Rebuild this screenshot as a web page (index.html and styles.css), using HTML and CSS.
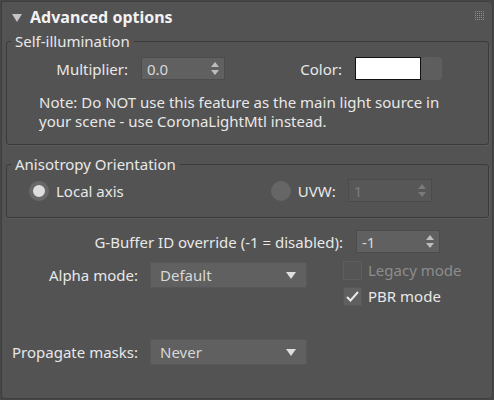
FILE: index.html
```html
<!DOCTYPE html>
<html lang="en">
<head>
    <meta charset="UTF-8">
    <title>Advanced options</title>
    <link rel="stylesheet" href="styles.css">
</head>
<body>
    <div class="rollout">
        <div class="rollout-head">
            <svg class="twisty" width="10" height="8" viewBox="0 0 10 8"><polygon points="0,0 10,0 5,8" fill="#c4c4c4"/></svg>
            <span class="rollout-title">Advanced options</span>
            <svg class="grip" width="9" height="9" viewBox="0 0 9 9">
                <defs><pattern id="dots" width="2" height="2" patternUnits="userSpaceOnUse"><rect width="1" height="1" fill="#8e8e8e"/></pattern></defs>
                <rect width="9" height="9" fill="url(#dots)"/>
            </svg>
        </div>

        <fieldset class="group group-self">
            <legend>Self-illumination</legend>
            <div class="row row-mult">
                <label class="lbl lbl-mult">Multiplier:</label>
                <div class="spinner">
                    <span class="spinner-value">0.0</span>
                    <svg class="arrows" width="8" height="13" viewBox="0 0 8 13"><polygon points="4,0 8,5 0,5" fill="#bdbdbd"/><polygon points="0,8 8,8 4,13" fill="#bdbdbd"/></svg>
                </div>
                <label class="lbl lbl-color">Color:</label>
                <div class="swatch"></div>
                <div class="swatch-btn"></div>
            </div>
            <p class="note">Note: Do NOT use this feature as the main light source in<br>your scene - use CoronaLightMtl instead.</p>
        </fieldset>

        <fieldset class="group group-aniso">
            <legend>Anisotropy Orientation</legend>
            <div class="row row-radio">
                <span class="radio checked"></span>
                <span class="radio-text">Local axis</span>
                <span class="radio radio-uvw"></span>
                <span class="radio-text">UVW:</span>
                <div class="spinner spinner-uvw disabled">
                    <span class="spinner-value">1</span>
                    <svg class="arrows" width="8" height="13" viewBox="0 0 8 13"><polygon points="4,0 8,5 0,5" fill="#7a7a7a"/><polygon points="0,8 8,8 4,13" fill="#7a7a7a"/></svg>
                </div>
            </div>
        </fieldset>

        <div class="row row-gbuf">
            <label class="lbl lbl-gbuf">G-Buffer ID override (-1 = disabled):</label>
            <div class="spinner spinner-gbuf">
                <span class="spinner-value">-1</span>
                <svg class="arrows" width="8" height="13" viewBox="0 0 8 13"><polygon points="4,0 8,5 0,5" fill="#bdbdbd"/><polygon points="0,8 8,8 4,13" fill="#bdbdbd"/></svg>
            </div>
        </div>

        <div class="row row-alpha">
            <label class="lbl lbl-left">Alpha mode:</label>
            <div class="dropdown">
                <span>Default</span>
                <svg class="drop-arrow" width="10" height="7" viewBox="0 0 10 7"><polygon points="0,0 10,0 5,7" fill="#dedede"/></svg>
            </div>
            <div class="checks">
                <div class="check-row disabled">
                    <span class="checkbox"></span>
                    <span class="check-text">Legacy mode</span>
                </div>
                <div class="check-row">
                    <span class="checkbox">
                        <svg width="13" height="11" viewBox="0 0 13 11"><polyline points="1,6 4.5,9.5 12,1" fill="none" stroke="#e8e8e8" stroke-width="2"/></svg>
                    </span>
                    <span class="check-text">PBR mode</span>
                </div>
            </div>
        </div>

        <div class="row row-prop">
            <label class="lbl lbl-left">Propagate masks:</label>
            <div class="dropdown">
                <span>Never</span>
                <svg class="drop-arrow" width="10" height="7" viewBox="0 0 10 7"><polygon points="0,0 10,0 5,7" fill="#dedede"/></svg>
            </div>
        </div>
    </div>
</body>
</html>
```
FILE: styles.css
```css
body {
    margin: 0;
    background-color: #464646;
    font-family: "Noto Sans", "Open Sans", sans-serif;
    font-size: 15px;
    color: #e8e8e8;
}

.rollout {
    margin: 1px 1px 0 1px;
    height: 396px;
    background-color: #535353;
    border: 1px solid #3f3f3f;
    border-radius: 2px 5px 4px 4px;
    box-sizing: content-box;
}

.rollout-head {
    display: flex;
    align-items: center;
    height: 30px;
    padding-left: 10px;
}
.twisty {
    margin-top: 1px;
}
.rollout-title {
    margin-left: 8px;
    font-weight: bold;
    font-size: 16px;
    color: #f2f2f2;
}
.grip {
    margin-left: auto;
    margin-right: 8px;
    margin-top: -3px;
}

.group {
    margin: 0 3px 0 4px;
    padding: 0;
    border: 1px solid #3b3b3b;
    border-radius: 3px;
    box-shadow: 1px 1px 0 #5b5b5b;
}
.group legend {
    margin-left: 4px;
    padding: 0 4px;
    line-height: 18px;
}

.row {
    display: flex;
    align-items: center;
}
.lbl {
    text-align: right;
}

.row-mult {
    margin-top: 7px;
}
.lbl-mult {
    width: 121px;
}
.lbl-color {
    width: 117px;
}

.spinner {
    display: flex;
    align-items: center;
    box-sizing: border-box;
    width: 84px;
    height: 23px;
    margin-left: 13px;
    padding: 0 5px 0 5px;
    background-color: #606060;
    border: 1px solid #4c4c4c;
    color: #d8d8d8;
}
.spinner-value {
    flex: 1;
}
.spinner.disabled {
    background-color: #575757;
    border-color: #4b4b4b;
    color: #7c7c7c;
}

.swatch {
    box-sizing: border-box;
    width: 66px;
    height: 23px;
    margin-left: 13px;
    background-color: #ffffff;
    border: 1px solid #111111;
}
.swatch-btn {
    width: 21px;
    height: 23px;
    background-color: #5e5e5e;
    border-radius: 4px;
}

.note {
    margin: 13px 0 13px 32px;
    line-height: 19px;
}

.group-aniso {
    margin-top: 10px;
}
.row-radio {
    padding: 6px 0 15px 22px;
}
.radio {
    box-sizing: border-box;
    width: 20px;
    height: 20px;
    border-radius: 50%;
    background-color: #666666;
}
.radio.checked {
    border: 4px solid #686868;
    background-color: #dedede;
}
.radio-text {
    margin-left: 7px;
}
.radio-uvw {
    margin-left: 147px;
}
.spinner-uvw {
    margin-left: 12px;
}

.row-gbuf {
    margin-top: 12px;
}
.lbl-gbuf {
    width: 341px;
}

.row-alpha {
    align-items: flex-start;
    margin-top: 9px;
}
.lbl-left {
    width: 136px;
    line-height: 26px;
}
.dropdown {
    display: flex;
    align-items: center;
    box-sizing: border-box;
    width: 157px;
    height: 26px;
    margin-left: 12px;
    padding: 0 10px 0 9px;
    background-color: #606060;
    border: 1px solid #575757;
    color: #d8d8d8;
}
.dropdown span {
    flex: 1;
}

.checks {
    margin-left: 36px;
    margin-top: -5px;
}
.check-row {
    display: flex;
    align-items: center;
    height: 26px;
}
.checkbox {
    display: flex;
    align-items: center;
    justify-content: center;
    box-sizing: border-box;
    width: 19px;
    height: 19px;
    background-color: #606060;
    border: 1px solid #575757;
}
.check-text {
    margin-left: 6px;
}
.check-row.disabled .checkbox {
    background-color: #555555;
    border-color: #5d5d5d;
}
.check-row.disabled .check-text {
    color: #8c8c8c;
}

.row-prop {
    margin-top: 30px;
}
```
